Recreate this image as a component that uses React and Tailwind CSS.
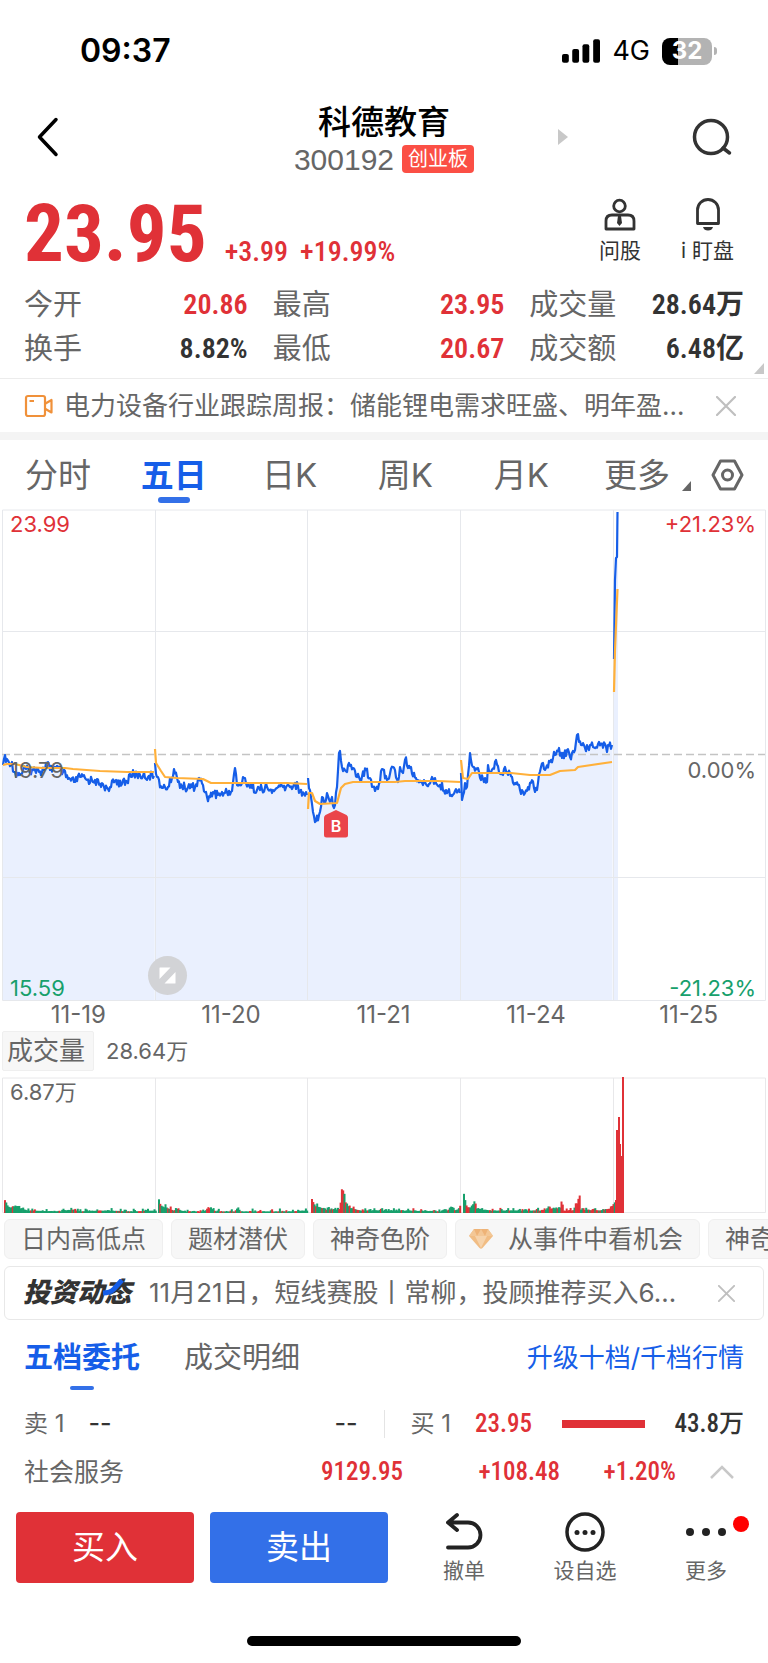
import { useState } from 'react';

const stats = [
  [
    { label: '今开', value: '20.86', up: true },
    { label: '最高', value: '23.95', up: true },
    { label: '成交量', value: '28.64万' },
  ],
  [
    { label: '换手', value: '8.82%' },
    { label: '最低', value: '20.67', up: true },
    { label: '成交额', value: '6.48亿' },
  ],
];

const periods = ['分时', '五日', '日K', '周K', '月K'];
const dates = ['11-19', '11-20', '11-21', '11-24', '11-25'];

// price path per trading day, [x, y]
const priceDays = [
  [[3, 256], [5, 246], [6, 253], [12, 253], [14, 263], [20, 266], [25, 259], [30, 264], [37, 259], [42, 263], [47, 254], [50, 261], [55, 258], [63, 263], [68, 270], [74, 273], [80, 268], [87, 271], [95, 271], [101, 278], [110, 278], [116, 271], [122, 275], [127, 273], [130, 265], [137, 266], [143, 267], [154, 267]],
  [[155, 254], [157, 268], [162, 279], [168, 278], [172, 269], [174, 260], [178, 273], [185, 279], [192, 278], [197, 277], [199, 269], [203, 276], [207, 288], [210, 288], [213, 283], [218, 286], [225, 284], [232, 282], [235, 259], [237, 276], [242, 274], [244, 269], [248, 275], [257, 281], [267, 278], [272, 284], [277, 279], [283, 278], [290, 278], [295, 274], [300, 282], [307, 286]],
  [[308, 269], [311, 288], [313, 303], [316, 312], [319, 306], [322, 288], [325, 294], [327, 284], [331, 291], [332, 288], [334, 299], [337, 278], [339, 244], [340, 242], [342, 258], [347, 263], [349, 254], [353, 259], [360, 271], [366, 261], [370, 269], [375, 282], [380, 273], [382, 260], [387, 271], [393, 258], [398, 273], [400, 258], [403, 264], [405, 251], [410, 259], [416, 269], [423, 276], [431, 271], [440, 276], [446, 281], [451, 286], [455, 282], [460, 284]],
  [[461, 264], [462, 291], [465, 274], [467, 278], [470, 244], [473, 258], [478, 259], [481, 271], [485, 269], [487, 273], [488, 256], [491, 263], [496, 251], [499, 263], [503, 266], [505, 258], [510, 264], [515, 274], [520, 281], [525, 284], [528, 278], [531, 274], [537, 281], [541, 258], [546, 259], [551, 251], [555, 246], [559, 239], [562, 249], [567, 241], [570, 248], [575, 241], [577, 226], [581, 236], [585, 239], [590, 236], [598, 235], [605, 235], [607, 243], [608, 236], [612, 236]],
];
const todayPrice = [[614, 150], [615, 71], [616, 49], [617, 48], [617.5, 3]];

const averageDays = [
  [[3, 256], [7, 255], [15, 255], [27, 258], [43, 259], [65, 259], [73, 260], [100, 262], [127, 263], [154, 263]],
  [[155, 240], [156, 254], [161, 262], [165, 268], [177, 269], [203, 270], [211, 274], [250, 274], [287, 274], [307, 275]],
  [[308, 300], [309, 284], [312, 284], [315, 292], [320, 295], [337, 294], [341, 279], [345, 275], [353, 273], [395, 273], [405, 272], [438, 272], [460, 273]],
  [[461, 251], [463, 269], [468, 270], [472, 264], [511, 264], [530, 266], [550, 266], [560, 262], [575, 261], [578, 258], [612, 253]],
  [[614, 183], [615, 141], [617.5, 80]],
];

// volume envelope, [x, height]
const volumeDays = [
  [[4, 13], [7, 6], [10, 4], [14, 7], [20, 3], [27, 1], [60, 0], [64, 1], [72, 2], [80, 0], [100, 1], [130, 0], [154, 1]],
  [[158, 14], [160, 6], [166, 4], [172, 1], [177, 3], [182, 0], [204, 0], [207, 5], [211, 3], [215, 0], [234, 0], [237, 5], [239, 0], [290, 0], [306, 1]],
  [[311, 13], [313, 5], [317, 6], [325, 2], [339, 2], [341, 25], [343, 22], [345, 10], [348, 4], [360, 1], [400, 1], [445, 0], [451, 5], [454, 1], [459, 4]],
  [[463, 17], [466, 5], [470, 4], [474, 13], [476, 3], [490, 1], [540, 1], [555, 4], [559, 3], [561, 13], [563, 1], [572, 1], [576, 9], [577, 6], [578, 23], [580, 2], [600, 1], [609, 3], [613, 9]],
];
const todayVolume = [[615, 13], [616, 83], [618, 96], [619, 69], [621, 57], [622, 136]];

// spans where volume is mostly on the buy side
const buySpans = [[310, 312], [338, 343], [540, 613]];

const noise = (n) => {
  const v = Math.sin(n * 12.9898) * 43758.5453;
  return v - Math.floor(v);
};

const valueAt = (points, x) => {
  for (let i = 1; i < points.length; i++) {
    const [x0, y0] = points[i - 1];
    const [x1, y1] = points[i];
    if (x <= x1) return y0 + ((y1 - y0) * (x - x0)) / (x1 - x0);
  }
  return points[points.length - 1][1];
};

const jagged = (points) => {
  const out = [];
  for (let i = 0; i < points.length; i++) {
    out.push(points[i]);
    if (i === points.length - 1) break;
    const end = points[i + 1][0];
    for (let x = points[i][0] + 1; x < end; x += 1) {
      out.push([x, valueAt(points, x) + (noise(x) - 0.5) * 9]);
    }
  }
  return out;
};

const toPath = (points) => 'M' + points.map(([x, y]) => `${x} ${y.toFixed(1)}`).join('L');
const toArea = (points) =>
  `${toPath(points)}L${points[points.length - 1][0]} 491L${points[0][0]} 491Z`;

const priceLines = [...priceDays.map(jagged), todayPrice];

const volumeBars = volumeDays.flatMap((day) => {
  const bars = [];
  for (let x = day[0][0]; x < day[day.length - 1][0] + 1; x += 1.3) {
    const height = valueAt(day, x) * (0.8 + noise(x) * 0.2) + 1.5 + noise(x + 3) ** 4 * 3;
    const buying = buySpans.some(([from, to]) => x >= from && x <= to);
    bars.push({ x, height, red: noise(x + 7) > (buying ? 0.4 : 0.8) || (buying && height > 7) });
  }
  return bars;
});

function PriceChart() {
  return (
    <div className="relative h-[492px]">
      <svg className="block h-full w-full" viewBox="0 0 768 492" preserveAspectRatio="none" fill="none">
        {priceLines.map((line, i) => (
          <path key={i} d={toArea(line)} fill="#eaf0fe" stroke="#eaf0fe" />
        ))}
        <path d="M2.5 1H765.5V491.5H2.5ZM155.5 1V491M307.5 1V491M460.5 1V491M613.5 1V491M2 122.5H765M2 368.5H765" stroke="#e6e8ec" strokeWidth="1" />
        <path d="M2 245.5H765" stroke="#c4c4c4" strokeWidth="1.5" strokeDasharray="8 4" />
        {priceLines.map((line, i) => (
          <path key={i} d={toPath(line)} stroke="#165ee8" strokeWidth="2.2" strokeLinejoin="round" />
        ))}
        {averageDays.map((line, i) => (
          <path key={i} d={toPath(line)} stroke="#ffb03a" strokeWidth="2.2" strokeLinejoin="round" />
        ))}
      </svg>
      <span className="absolute top-0 left-[10px] text-[22px] leading-[30px] text-[#e03137]">23.99</span>
      <span className="absolute top-0 right-3 text-[22px] leading-[30px] text-[#e03137]">+21.23%</span>
      <span className="absolute top-[246px] left-[10px] text-[22px] leading-[30px] text-[#666]">19.79</span>
      <span className="absolute top-[246px] right-3 text-[22px] leading-[30px] text-[#666]">0.00%</span>
      <span className="absolute bottom-0 left-[10px] text-[22px] leading-[26px] text-[#17a06c]">15.59</span>
      <span className="absolute right-3 bottom-0 text-[22px] leading-[26px] text-[#17a06c]">-21.23%</span>
      <span className="absolute top-[301px] left-[42.2%] h-7 w-6">
        <svg className="absolute inset-0" width="24" height="28" viewBox="0 0 24 28">
          <path d="M12 0L22.500 5Q24 6 24 8V25Q24 27.500 21.500 27.500H2.500Q0 27.500 0 25V8Q0 6 1.500 5Z" fill="#ea4449" />
        </svg>
        <b className="relative block pt-1 text-center text-base leading-6 font-semibold text-white">B</b>
      </span>
      <button aria-label="全屏" className="absolute bottom-[6px] left-[148px] flex size-[39px] items-center justify-center rounded-full bg-[#d2d3d6]">
        <svg width="17" height="17" viewBox="0 0 17 17" fill="#fff">
          <path d="M0.500 1Q0.500 0.500 1 0.500H11.500L0.500 12ZM16.500 16Q16.500 16.500 16 16.500H5.500L16.500 5Z" />
        </svg>
      </button>
    </div>
  );
}

function VolumeChart() {
  return (
    <div className="relative mt-[6px] h-[136px]">
      <svg className="block h-full w-full" viewBox="0 0 768 136" preserveAspectRatio="none" fill="none">
        <path d="M2.500 1H765.500V135.500H2.500ZM155.500 1V135M307.500 1V135M460.500 1V135M613.500 1V135" stroke="#e8e8ea" />
        {volumeBars.map(({ x, height, red }) => (
          <rect key={x} x={x} y={136 - height} width="2" height={height} fill={red ? '#e03137' : '#17a06c'} />
        ))}
        {todayVolume.map(([x, height]) => (
          <rect key={x} x={x} y={136 - height} width="2" height={height} fill="#e03137" />
        ))}
      </svg>
      <span className="absolute top-0 left-[10px] text-[22px] leading-[30px] text-[#666]">6.87万</span>
    </div>
  );
}

function CloseIcon({ size }) {
  return (
    <svg width={size} height={size} viewBox="0 0 20 20" stroke="#bfbfbf" strokeWidth="2.200" strokeLinecap="round">
      <path d="M1 1L19 19M19 1L1 19" />
    </svg>
  );
}

export default function App() {
  const [period, setPeriod] = useState('五日');

  return (
    <div className="flex min-h-screen flex-col overflow-hidden bg-white font-['Inter','Noto_Sans_CJK_SC',sans-serif] text-[#666]">
      <div className="flex h-[102px] items-center justify-between pr-[51px] pl-20 text-black">
        <span className="text-[32px] leading-10 font-semibold">09:37</span>
        <div className="flex items-center gap-3">
          <svg width="38" height="24" viewBox="0 0 39 24">
            <rect x="0" y="15" width="7" height="9" rx="2" />
            <rect x="10.500" y="10" width="7" height="14" rx="2" />
            <rect x="21" y="5" width="7" height="19" rx="2" />
            <rect x="32" y="0" width="7" height="24" rx="2" />
          </svg>
          <span className="text-[27px] leading-8">4G</span>
          <span className="flex items-center gap-[2px]">
            <span className="flex h-[27px] w-[50px] items-center justify-center rounded-lg bg-linear-to-r from-black from-32% to-[#b3b3b3] to-32% text-2xl leading-none font-bold text-white">32</span>
            <span className="h-2 w-[3px] rounded-r-full bg-[#b3b3b3]" />
          </span>
        </div>
      </div>

      <header className="flex h-[74px] items-center justify-between px-9">
        <div className="mb-1 w-[174px]">
          <button aria-label="返回" className="block">
            <svg width="24" height="40" viewBox="0 0 24 40" fill="none" stroke="#000" strokeWidth="3.500" strokeLinecap="round" strokeLinejoin="round">
              <path d="M20 2.500L3.500 20L20 37.500" />
            </svg>
          </button>
        </div>
        <div className="text-center">
          <h1 className="text-[33px] leading-10 font-medium text-black">科德教育</h1>
          <p className="flex h-[34px] items-center justify-center gap-2">
            <span className="font-['Liberation_Sans',sans-serif] text-[30px]">300192</span>
            <span className="rounded-sm bg-[#fb4f45] px-[6px] text-xl leading-7 text-white">创业板</span>
          </p>
        </div>
        <div className="mb-1 flex w-[174px] items-center justify-between">
          <svg width="10" height="16" viewBox="0 0 10 16" fill="#c8c8c8">
            <path d="M0 0L10 8L0 16Z" />
          </svg>
          <button aria-label="搜索">
            <svg width="40" height="38" viewBox="0 0 40 38" fill="none" stroke="#333" strokeWidth="3.500" strokeLinecap="round">
              <circle cx="19" cy="19" r="16.500" />
              <path d="M31 30L37.500 35" />
            </svg>
          </button>
        </div>
      </header>

      <section className="flex justify-between px-6 pt-[22px]">
        <div className="flex items-baseline font-['Roboto_Condensed','Roboto',sans-serif] font-medium text-[#e03137]">
          <strong className="text-[79px] leading-[72px] font-bold">23.95</strong>
          <span className="ml-[18px] text-[28px] leading-8">+3.99</span>
          <span className="ml-3 text-[28px] leading-8">+19.99%</span>
        </div>
        <div className="flex gap-10 pr-[10px] text-[21px] text-[#333]">
          <button className="flex flex-col items-center gap-2">
            <svg width="32" height="33" viewBox="0 0 32 33" fill="none" stroke="#333" strokeWidth="2.800">
              <circle cx="15.500" cy="8" r="5.800" />
              <path d="M2 31V23Q2 17 8 17H24Q30 17 30 23V31Z" strokeLinejoin="round" />
              <path d="M14 18H17L18 25L15.500 28L13 25Z" fill="#333" stroke="none" />
            </svg>
            <span className="leading-6">问股</span>
          </button>
          <button className="flex flex-col items-center gap-2">
            <svg width="26" height="33" viewBox="0 0 26 33" fill="none" stroke="#333" strokeWidth="2.800">
              <path d="M2.500 25.500V12A10.500 10.500 0 0 1 23.500 12V25.500Z" strokeLinejoin="round" />
              <path d="M8 29H18Q17 32.500 13 32.500Q9 32.500 8 29Z" fill="#333" stroke="none" />
            </svg>
            <span className="leading-6">i 盯盘</span>
          </button>
        </div>
      </section>

      <section className="relative border-b border-[#ececec] pt-[13px] pr-6 pb-[7px] pl-6">
        {stats.map((row, i) => (
          <dl key={i} className="grid h-11 grid-cols-[223fr_231fr_214fr] items-center gap-[25px]">
            {row.map(({ label, value, up }) => (
              <div key={label} className="flex items-center justify-between">
                <dt className="text-[29px] leading-10">{label}</dt>
                <dd className={`font-['Roboto_Condensed','Roboto','Noto_Sans_CJK_SC',sans-serif] text-[28px] leading-10 font-semibold ${up ? 'text-[#e03137]' : 'text-[#333]'}`}>{value}</dd>
              </div>
            ))}
          </dl>
        ))}
        <svg className="absolute right-1 bottom-1" width="10" height="11" viewBox="0 0 10 11" fill="#c8c8c8">
          <path d="M10 0V11H0Z" />
        </svg>
      </section>

      <section className="flex h-[53px] items-center px-6">
        <svg width="30" height="24" viewBox="0 0 30 24" fill="none" stroke="#f0913a" strokeWidth="2.200" strokeLinejoin="round">
          <rect x="2" y="2" width="19" height="20" rx="2" />
          <path d="M5.500 7H10M21.500 9.500L27.500 6V18.500L21.500 15" />
        </svg>
        <a href="#report" className="ml-[10px] flex-1 truncate text-[26px] leading-9">电力设备行业跟踪周报：储能锂电需求旺盛、明年盈…</a>
        <button aria-label="关闭" className="pr-2">
          <CloseIcon size={20} />
        </button>
      </section>

      <div className="h-2 bg-[#f4f4f4]" />

      <nav className="flex h-[69px] items-center text-[33px] leading-[48px]">
        {periods.map((name) => (
          <button key={name} onClick={() => setPeriod(name)} className={`relative flex-1 ${name === period ? 'font-bold text-[#165ee8]' : ''}`}>
            {name}
            {name === period && <span className="absolute -bottom-1 left-1/2 h-[6px] w-8 -translate-x-1/2 rounded-full bg-[#3370e8]" />}
          </button>
        ))}
        <button className="relative flex-1">
          更多
          <svg className="absolute right-1 bottom-2" width="9" height="10" viewBox="0 0 9 10" fill="#666">
            <path d="M9 0V10H0Z" />
          </svg>
        </button>
        <button aria-label="设置" className="w-[73px] pl-4">
          <svg width="33" height="32" viewBox="0 0 33 32" fill="none" stroke="#666" strokeWidth="3" strokeLinejoin="round">
            <path d="M9.500 2H23.500L31 16L23.500 30H9.500L2 16Z" />
            <circle cx="16.500" cy="16" r="5" />
          </svg>
        </button>
      </nav>

      <PriceChart />
      <div className="grid h-7 grid-cols-5 items-center pr-[3px] pl-[2px] text-center text-2xl leading-7">
        {dates.map((date) => (
          <span key={date}>{date}</span>
        ))}
      </div>

      <div className="mt-[2px] flex h-10 items-center gap-3 pl-[2px]">
        <button className="rounded-xs border border-[#efefef] bg-[#f7f7f7] pr-2 pl-1 text-[26px] leading-[38px]">成交量</button>
        <span className="text-[22px]">28.64万</span>
      </div>
      <VolumeChart />

      <div className="mt-[6px] flex gap-2 overflow-hidden pl-1 text-[25px] leading-[38px]">
        {['日内高低点', '题材潜伏', '神奇色阶'].map((tag) => (
          <button key={tag} className="shrink-0 rounded-md border border-[#efefef] bg-[#f7f7f7] px-4">{tag}</button>
        ))}
        <button className="flex shrink-0 items-center gap-[15px] rounded-md border border-[#efefef] bg-[#f7f7f7] pr-4 pl-[13px]">
          <svg width="24" height="20" viewBox="0 0 24 20">
            <path d="M5 0H19L24 7L13.500 19Q12 20.500 10.500 19L0 7Z" fill="#f1bd84" />
            <path d="M5 0H19L24 7H0Z" fill="#f3c796" />
            <path d="M6 7H18L12 19Z" fill="#f6d3ab" />
            <path d="M5 0L8 7L12 0L16 7L19 0Z" fill="#eeb377" />
          </svg>
          从事件中看机会
        </button>
        <button className="shrink-0 rounded-md border border-[#efefef] bg-[#f7f7f7] px-4">神奇九转</button>
      </div>

      <section className="mx-1 mt-[7px] flex h-[54px] items-center rounded-md border border-[#e8e8e8] pr-6 pl-[18px]">
        <strong className="relative text-[27px] leading-9 font-black text-[#333] italic">
          投资动态
          <svg className="absolute top-1 right-1" width="24" height="18" viewBox="0 0 24 18" fill="none" stroke="#165ee8" strokeWidth="5">
            <path d="M0 14Q7 14 11 10L19 1" />
          </svg>
        </strong>
        <a href="#news" className="ml-[18px] flex-1 truncate text-[26px] leading-9">11月21日，短线赛股丨常柳，投顾推荐买入6…</a>
        <button aria-label="关闭" className="pr-1">
          <CloseIcon size={17} />
        </button>
      </section>

      <section className="px-6">
        <div className="flex h-[76px] items-center justify-between">
          <div className="flex gap-11 text-[29px] leading-10">
            <button className="relative font-bold text-[#165ee8]">
              五档委托
              <span className="absolute -bottom-3 left-1/2 h-1 w-6 -translate-x-1/2 rounded-full bg-[#3370e8]" />
            </button>
            <button>成交明细</button>
          </div>
          <a href="#upgrade" className="text-[26px] leading-10 text-[#165ee8]">升级十档/千档行情</a>
        </div>

        <div className="flex h-[56px] items-center text-[25px]">
          <div className="flex flex-1 items-center">
            <span className="text-2xl">卖 1</span>
            <b className="ml-6 font-medium text-[#333]">--</b>
            <b className="mr-[26px] ml-auto font-medium text-[#333]">--</b>
          </div>
          <span className="h-7 w-px bg-[#e4e4e4]" />
          <div className="flex flex-1 items-center">
            <span className="ml-[26px] text-2xl">买 1</span>
            <b className="ml-6 font-['Roboto_Condensed','Roboto',sans-serif] font-medium text-[#e03137]">23.95</b>
            <span className="mx-[30px] h-2 flex-1 bg-[#e03137]" />
            <b className="font-['Roboto_Condensed','Roboto','Noto_Sans_CJK_SC',sans-serif] font-medium text-[#333]">43.8万</b>
          </div>
        </div>

        <div className="flex h-10 items-center text-[25px] leading-10">
          <span className="flex-1">社会服务</span>
          <div className="flex font-['Roboto_Condensed','Roboto',sans-serif] font-medium text-[#e03137]">
            <span>9129.95</span>
            <span className="w-[157px] text-right">+108.48</span>
            <span className="w-[116px] text-right">+1.20%</span>
          </div>
          <button aria-label="展开" className="mr-[10px] ml-[34px]">
            <svg width="24" height="14" viewBox="0 0 24 14" fill="none" stroke="#c8c8c8" strokeWidth="2.500">
              <path d="M1 13L12 2L23 13" />
            </svg>
          </button>
        </div>
      </section>

      <footer className="mt-5 flex gap-4 px-4">
        <button className="h-[71px] flex-1 rounded-sm bg-[#e03137] text-[33px] text-white">买入</button>
        <button className="h-[71px] flex-1 rounded-sm bg-[#3370e8] text-[33px] text-white">卖出</button>
        <div className="flex w-[348px] justify-between pr-[25px] pl-[39px] text-[21px] leading-6">
          <button className="flex flex-col items-center justify-between">
            <svg width="38" height="38" viewBox="0 0 38 38" fill="none" stroke="#222" strokeWidth="3.800" strokeLinecap="round" strokeLinejoin="round">
              <path d="M12 3L3 10.500L12 18M3 10.500H23A12.500 12.500 0 0 1 23 35.500H3" />
            </svg>
            撤单
          </button>
          <button className="flex flex-col items-center justify-between">
            <svg width="40" height="40" viewBox="0 0 40 40" fill="#222">
              <circle cx="20" cy="20" r="18" fill="none" stroke="#222" strokeWidth="3.500" />
              <circle cx="12" cy="20.500" r="2.500" />
              <circle cx="20" cy="20.500" r="2.500" />
              <circle cx="28" cy="20.500" r="2.500" />
            </svg>
            设自选
          </button>
          <button className="relative flex flex-col items-center justify-between">
            <svg width="42" height="40" viewBox="0 0 42 40" fill="#222">
              <circle cx="5" cy="20" r="4" />
              <circle cx="21" cy="20" r="4" />
              <circle cx="37" cy="20" r="4" />
            </svg>
            更多
            <span className="absolute top-1 -right-[22px] size-4 rounded-full bg-[#ff0000]" />
          </button>
        </div>
      </footer>

      <div className="mx-auto mt-[53px] mb-[17px] h-[10px] w-[274px] rounded-full bg-black" />
    </div>
  );
}
